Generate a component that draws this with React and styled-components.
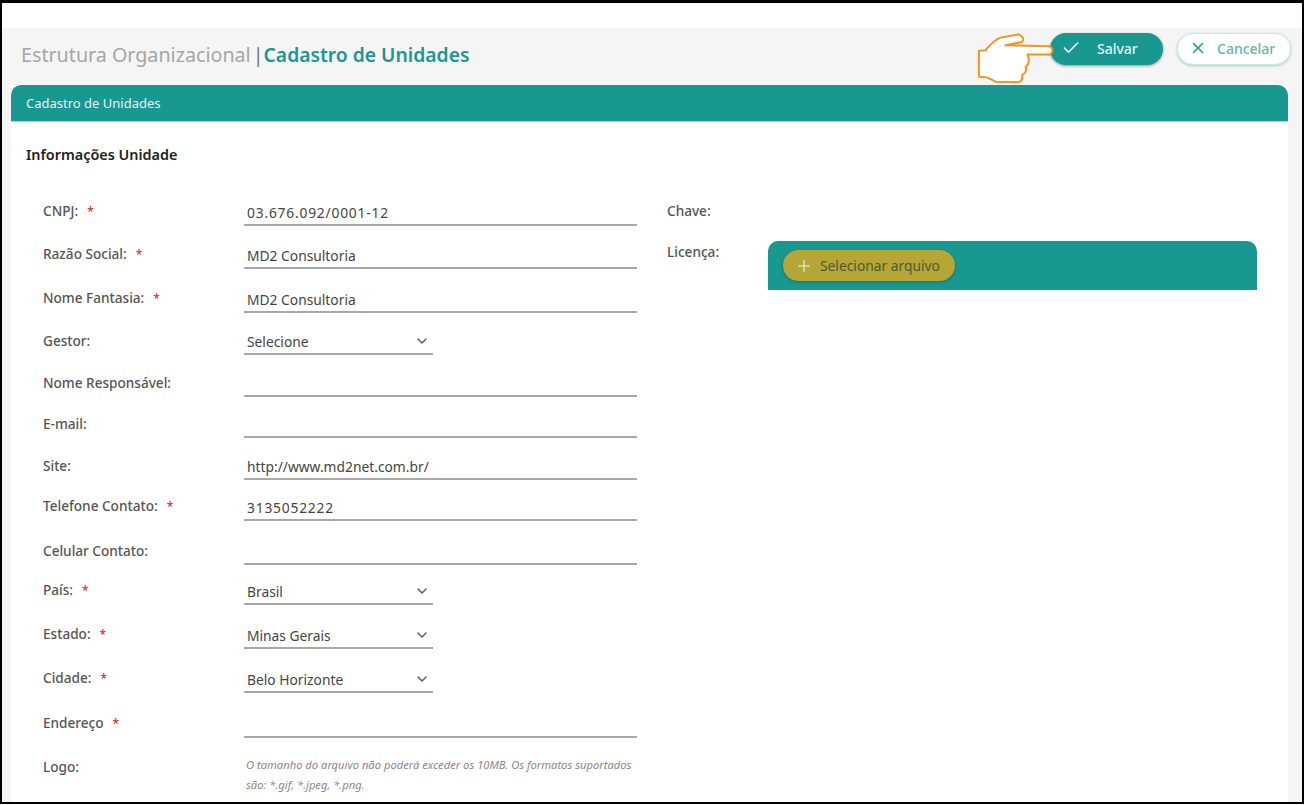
import styled, { createGlobalStyle } from 'styled-components';
import { Check, X, Plus, ChevronDown } from 'lucide-react';

const TEAL = '#199791';

const rows = [
  { label: 'CNPJ:', required: true, value: '03.676.092/0001-12', numeric: true, height: 44 },
  { label: 'Razão Social:', required: true, value: 'MD2 Consultoria', height: 43 },
  { label: 'Nome Fantasia:', required: true, value: 'MD2 Consultoria', height: 44 },
  { label: 'Gestor:', value: 'Selecione', select: true, height: 42 },
  { label: 'Nome Responsável:', value: '', height: 42 },
  { label: 'E-mail:', value: '', height: 41 },
  { label: 'Site:', value: 'http://www.md2net.com.br/', height: 42 },
  { label: 'Telefone Contato:', required: true, value: '3135052222', numeric: true, height: 41 },
  { label: 'Celular Contato:', value: '', height: 44 },
  { label: 'País:', required: true, value: 'Brasil', select: true, height: 40 },
  { label: 'Estado:', required: true, value: 'Minas Gerais', select: true, height: 44 },
  { label: 'Cidade:', required: true, value: 'Belo Horizonte', select: true, height: 44 },
  { label: 'Endereço', required: true, value: '', height: 45 },
];

export default function App() {
  return (
    <>
      <GlobalStyle />
      <Frame>
        <TopStrip />
        <Page>
          <Header>
            <Title>
              Estrutura Organizacional<Divider>|</Divider>
              <strong>Cadastro de Unidades</strong>
            </Title>
            <Actions>
              <Hand viewBox="80 95 240 160" fill="#fff" stroke="#f7941e" strokeWidth="6" strokeLinejoin="round">
                <path d="M165 135 L215 125 Q226 112 205 102 L150 112 Q130 120 105 150 L85 152 L85 230 L110 232 L135 245 L205 247 Q220 240 215 225 Q232 215 226 200 Q242 188 232 163 L300 163 Q314 150 300 138 Z" />
              </Hand>
              <SaveButton>
                <Check size={20} strokeWidth={2} />
                Salvar
              </SaveButton>
              <CancelButton>
                <X size={18} strokeWidth={2} color={TEAL} />
                Cancelar
              </CancelButton>
            </Actions>
          </Header>
          <Panel>
            <PanelHeader>Cadastro de Unidades</PanelHeader>
            <PanelBody>
              <SectionTitle>Informações Unidade</SectionTitle>
              <Columns>
                <FormColumn>
                  {rows.map(row => (
                    <Row key={row.label} $height={row.height}>
                      <Label>
                        {row.label}
                        {row.required && <Required>*</Required>}
                      </Label>
                      <Field $select={row.select} $numeric={row.numeric}>
                        {row.value}
                        {row.select && <ChevronDown size={16} strokeWidth={2} color="#555" />}
                      </Field>
                    </Row>
                  ))}
                  <LogoRow>
                    <Label>Logo:</Label>
                    <Hint>
                      O tamanho do arquivo não poderá exceder os 10MB. Os formatos suportados são: *.gif, *.jpeg, *.png.
                    </Hint>
                  </LogoRow>
                </FormColumn>
                <SideColumn>
                  <KeyLabel>Chave:</KeyLabel>
                  <LicenseRow>
                    <LicenseLabel>Licença:</LicenseLabel>
                    <UploadBar>
                      <UploadButton>
                        <Plus size={18} strokeWidth={2} color="#cfe6c4" />
                        Selecionar arquivo
                      </UploadButton>
                    </UploadBar>
                  </LicenseRow>
                </SideColumn>
              </Columns>
            </PanelBody>
          </Panel>
        </Page>
      </Frame>
    </>
  );
}

const GlobalStyle = createGlobalStyle`
  html, body {
    margin: 0;
    background: #fff;
  }

  body {
    font-family: "Noto Sans", "Open Sans", sans-serif;
  }
`;

const Frame = styled.div`
  box-sizing: border-box;
  width: 1304px;
  height: 804px;
  border: 2px solid #000;
  border-top-width: 3px;
  display: flex;
  flex-direction: column;
  overflow: hidden;
`;

const TopStrip = styled.div`
  height: 25px;
  flex: none;
  background: #fff;
`;

const Page = styled.div`
  flex: 1;
  min-height: 0;
  background: #f5f5f5;
  padding: 0 14px 0 9px;
  display: flex;
  flex-direction: column;
`;

const Header = styled.div`
  height: 57px;
  flex: none;
  display: flex;
  justify-content: space-between;
  align-items: flex-start;
`;

const Title = styled.h1`
  margin: 14px 0 0 10px;
  font-size: 19.7px;
  line-height: 26px;
  font-weight: 400;
  color: #a6a6a6;
  white-space: nowrap;

  strong {
    font-size: 19.3px;
    font-weight: 600;
    color: ${TEAL};
  }
`;

const Divider = styled.span`
  color: #777;
  margin: 0 0 0 2px;
`;

const Actions = styled.div`
  position: relative;
  display: flex;
  gap: 14px;
  margin: 5px -3px 0 0;
`;

const Hand = styled.svg`
  position: absolute;
  left: -73px;
  top: -1px;
  width: 80px;
  height: 53px;
  z-index: 1;
`;

const PillButton = styled.button`
  box-sizing: border-box;
  height: 32px;
  border-radius: 16px;
  display: flex;
  align-items: center;
  font: 500 14px "Noto Sans", sans-serif;
  padding: 0 0 2px;
`;

const SaveButton = styled(PillButton)`
  width: 113px;
  background: ${TEAL};
  border: 0;
  color: #e4f3f1;
  padding-left: 11px;
  gap: 16px;
  box-shadow: 0 1px 3px rgba(0, 0, 0, 0.4);
`;

const CancelButton = styled(PillButton)`
  width: 114px;
  background: #fff;
  border: 1px solid #cfe8e6;
  color: #5fb5b0;
  padding-left: 11px;
  gap: 10px;
  box-shadow: 0 1px 3px rgba(25, 151, 145, 0.4);
`;

const Panel = styled.section`
  flex: 1;
  min-height: 0;
  background: #fff;
  display: flex;
  flex-direction: column;
`;

const PanelHeader = styled.div`
  height: 37px;
  flex: none;
  box-sizing: border-box;
  background: ${TEAL};
  border-radius: 10px 10px 0 0;
  border-bottom: 1px solid #a5dcd8;
  padding-left: 15px;
  color: #e6f4f3;
  font-size: 13px;
  line-height: 36px;
`;

const PanelBody = styled.div`
  flex: 1;
  min-height: 0;
  padding: 0 31px 0 15px;
  overflow: hidden;
`;

const SectionTitle = styled.h2`
  margin: 23px 0 0;
  font-size: 14.4px;
  line-height: 20px;
  font-weight: 600;
  color: #222;
`;

const Columns = styled.div`
  display: flex;
  margin-top: 17px;
  padding-left: 17px;
`;

const FormColumn = styled.div`
  width: 594px;
  flex: none;
`;

const Row = styled.div`
  display: flex;
  align-items: flex-end;
  height: ${({ $height }) => $height}px;
`;

const Label = styled.label`
  display: block;
  width: 201px;
  flex: none;
  font-size: 13.6px;
  line-height: 18px;
  font-weight: 500;
  color: #555;
  padding-bottom: 5px;
`;

const Required = styled.span`
  color: #ee2222;
  font-size: 12px;
  margin-left: 9px;
`;

const Field = styled.div`
  box-sizing: border-box;
  width: ${({ $select }) => ($select ? '189px' : '393px')};
  height: 26px;
  padding: 0 3px;
  border-bottom: 2px solid #a8a8a8;
  display: flex;
  align-items: center;
  justify-content: space-between;
  font-size: 13.8px;
  letter-spacing: ${({ $numeric }) => ($numeric ? '0.8px' : '0')};
  color: #444;
`;

const LogoRow = styled.div`
  display: flex;
  align-items: flex-start;
  margin-top: 20px;
`;

const Hint = styled.p`
  width: 393px;
  margin: -3px 0 0;
  padding-left: 2px;
  box-sizing: border-box;
  font-size: 11.2px;
  line-height: 20px;
  font-style: italic;
  color: #888;
`;

const SideColumn = styled.div`
  flex: 1;
  padding: 20px 0 0 30px;
`;

const KeyLabel = styled(Label)`
  width: auto;
`;

const LicenseRow = styled.div`
  display: flex;
  align-items: flex-start;
  margin-top: 18px;
`;

const LicenseLabel = styled(Label)`
  width: 101px;
`;

const UploadBar = styled.div`
  width: 489px;
  height: 49px;
  margin-top: -2px;
  box-sizing: border-box;
  background: ${TEAL};
  border-radius: 10px 10px 0 0;
  padding: 9px 0 0 15px;
  flex: none;
`;

const UploadButton = styled.div`
  width: 172px;
  height: 31px;
  box-sizing: border-box;
  border-radius: 16px;
  background: #b5a635;
  box-shadow: 0 1px 3px rgba(0, 0, 0, 0.25);
  padding-left: 12px;
  display: flex;
  align-items: center;
  gap: 7px;
  font-size: 13.8px;
  color: #4e5a32;
`;
